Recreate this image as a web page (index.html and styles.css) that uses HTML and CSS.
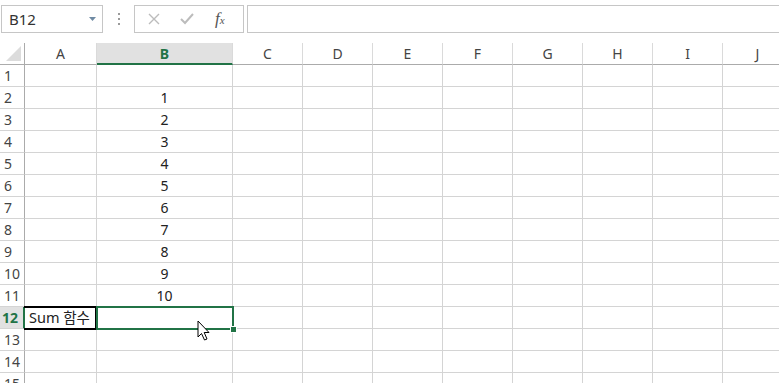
FILE: index.html
```html
<!DOCTYPE html>
<html lang="ko">
    <head>
        <meta charset="UTF-8">
        <title>Sum 함수</title>
        <link rel="stylesheet" href="styles.css">
    </head>
    <body>
        <div class="toolbar">
            <div class="namebox">
                <span>B12</span>
                <svg class="drop" width="8" height="5" viewBox="0 0 8 5"><path d="M0 0 H7 L3.5 4 Z" fill="#6f8aa3"/></svg>
            </div>
            <div class="dots"><i></i><i></i><i></i></div>
            <div class="fnbox">
                <svg width="12" height="12" viewBox="0 0 12 12"><path d="M1 1 L11 11 M11 1 L1 11" stroke="#bcbcbc" stroke-width="1.4"/></svg>
                <svg width="14" height="12" viewBox="0 0 14 12"><path d="M1 6 L5 10 L13 1" stroke="#bcbcbc" stroke-width="2" fill="none"/></svg>
                <span class="fx">f<sub>x</sub></span>
            </div>
            <div class="formula"></div>
        </div>

        <div class="sheet">
            <div class="row head">
                <div class="rh corner"><svg width="15" height="15" viewBox="0 0 15 15"><path d="M15 0 V15 H0 Z" fill="#dcdcdc"/></svg></div>
                <div class="c a">A</div><div class="c b sel">B</div><div class="c">C</div><div class="c">D</div><div class="c">E</div><div class="c">F</div><div class="c">G</div><div class="c">H</div><div class="c">I</div><div class="c">J</div>
            </div>
            <div class="row"><div class="rh">1</div><div class="c a"></div><div class="c b"></div><div class="c"></div><div class="c"></div><div class="c"></div><div class="c"></div><div class="c"></div><div class="c"></div><div class="c"></div><div class="c"></div></div>
            <div class="row"><div class="rh">2</div><div class="c a"></div><div class="c b">1</div><div class="c"></div><div class="c"></div><div class="c"></div><div class="c"></div><div class="c"></div><div class="c"></div><div class="c"></div><div class="c"></div></div>
            <div class="row"><div class="rh">3</div><div class="c a"></div><div class="c b">2</div><div class="c"></div><div class="c"></div><div class="c"></div><div class="c"></div><div class="c"></div><div class="c"></div><div class="c"></div><div class="c"></div></div>
            <div class="row"><div class="rh">4</div><div class="c a"></div><div class="c b">3</div><div class="c"></div><div class="c"></div><div class="c"></div><div class="c"></div><div class="c"></div><div class="c"></div><div class="c"></div><div class="c"></div></div>
            <div class="row"><div class="rh">5</div><div class="c a"></div><div class="c b">4</div><div class="c"></div><div class="c"></div><div class="c"></div><div class="c"></div><div class="c"></div><div class="c"></div><div class="c"></div><div class="c"></div></div>
            <div class="row"><div class="rh">6</div><div class="c a"></div><div class="c b">5</div><div class="c"></div><div class="c"></div><div class="c"></div><div class="c"></div><div class="c"></div><div class="c"></div><div class="c"></div><div class="c"></div></div>
            <div class="row"><div class="rh">7</div><div class="c a"></div><div class="c b">6</div><div class="c"></div><div class="c"></div><div class="c"></div><div class="c"></div><div class="c"></div><div class="c"></div><div class="c"></div><div class="c"></div></div>
            <div class="row"><div class="rh">8</div><div class="c a"></div><div class="c b">7</div><div class="c"></div><div class="c"></div><div class="c"></div><div class="c"></div><div class="c"></div><div class="c"></div><div class="c"></div><div class="c"></div></div>
            <div class="row"><div class="rh">9</div><div class="c a"></div><div class="c b">8</div><div class="c"></div><div class="c"></div><div class="c"></div><div class="c"></div><div class="c"></div><div class="c"></div><div class="c"></div><div class="c"></div></div>
            <div class="row"><div class="rh">10</div><div class="c a"></div><div class="c b">9</div><div class="c"></div><div class="c"></div><div class="c"></div><div class="c"></div><div class="c"></div><div class="c"></div><div class="c"></div><div class="c"></div></div>
            <div class="row"><div class="rh">11</div><div class="c a"></div><div class="c b">10</div><div class="c"></div><div class="c"></div><div class="c"></div><div class="c"></div><div class="c"></div><div class="c"></div><div class="c"></div><div class="c"></div></div>
            <div class="row"><div class="rh sel">12</div><div class="c a editing">Sum 함수</div><div class="c b active"><span class="handle"></span><svg class="cursor" width="14" height="22" viewBox="0 0 14 22"><path d="M1 1 V17 L4.5 13.5 L7.5 20 L10 19 L7.2 12.5 H12 Z" fill="#fff" stroke="#000" stroke-width="1"/></svg></div><div class="c"></div><div class="c"></div><div class="c"></div><div class="c"></div><div class="c"></div><div class="c"></div><div class="c"></div><div class="c"></div></div>
            <div class="row"><div class="rh">13</div><div class="c a"></div><div class="c b"></div><div class="c"></div><div class="c"></div><div class="c"></div><div class="c"></div><div class="c"></div><div class="c"></div><div class="c"></div><div class="c"></div></div>
            <div class="row"><div class="rh">14</div><div class="c a"></div><div class="c b"></div><div class="c"></div><div class="c"></div><div class="c"></div><div class="c"></div><div class="c"></div><div class="c"></div><div class="c"></div><div class="c"></div></div>
            <div class="row"><div class="rh">15</div><div class="c a"></div><div class="c b"></div><div class="c"></div><div class="c"></div><div class="c"></div><div class="c"></div><div class="c"></div><div class="c"></div><div class="c"></div><div class="c"></div></div>
        </div>
    </body>
</html>
```

FILE: styles.css
```css
* {
    box-sizing: border-box;
}

html, body {
    margin: 0;
    height: 100%;
    overflow: hidden;
}

body {
    background: #fff;
    font-family: "Noto Sans", "Noto Sans CJK KR", sans-serif;
    font-size: 14px;
    color: #222;
}

.toolbar {
    display: flex;
    align-items: center;
    height: 28px;
    margin: 5px 0 10px 1px;
}

.namebox {
    width: 102px;
    height: 28px;
    border: 1px solid #c6c6c6;
    display: flex;
    align-items: center;
    justify-content: space-between;
    padding: 0 5px 0 7px;
    font-size: 15px;
    color: #333;
}

.namebox .drop {
    margin-top: 1px;
}

.dots {
    width: 31px;
    display: flex;
    flex-direction: column;
    align-items: center;
    gap: 3px;
}

.dots i {
    width: 2px;
    height: 2px;
    background: #9a9a9a;
}

.fnbox {
    width: 110px;
    height: 28px;
    border: 1px solid #c6c6c6;
    display: flex;
    align-items: center;
    padding: 0 10px 0 13px;
    gap: 20px;
}

.fnbox .fx {
    font-family: "Liberation Serif", serif;
    font-style: italic;
    font-size: 17px;
    color: #555;
    margin-left: 1px;
}

.fnbox .fx sub {
    font-size: 11px;
    vertical-align: 0;
}

.formula {
    flex: 1;
    height: 28px;
    margin-left: 3px;
    border: 1px solid #c6c6c6;
    border-right: none;
}

.row {
    display: flex;
    height: 22px;
}

.rh {
    flex: 0 0 25px;
    border-right: 1px solid #ababab;
    border-bottom: 1px solid #d4d4d4;
    padding-left: 4px;
    line-height: 21px;
    color: #444;
    font-size: 14px;
}

.rh.sel {
    background: #e1e1e1;
    color: #217346;
    font-weight: bold;
    padding-left: 2px;
    border-right: 2px solid #217346;
}

.c {
    flex: 0 0 70px;
    border-right: 1px solid #d4d4d4;
    border-bottom: 1px solid #d4d4d4;
    text-align: center;
    line-height: 21px;
    white-space: nowrap;
}

.c.a {
    flex-basis: 72px;
}

.c.b {
    flex-basis: 136px;
}

.head .rh,
.head .c {
    border-bottom-color: #ababab;
    border-right-color: #dadada;
    color: #444;
}

.head .corner {
    display: flex;
    align-items: flex-end;
    justify-content: flex-end;
    padding: 0 3px 3px 0;
    border-right-color: #ababab;
}

.head .c.sel {
    background: #e1e1e1;
    color: #217346;
    font-weight: bold;
    border-bottom: 2px solid #217346;
}

.c.editing {
    position: relative;
    text-align: left;
    padding-left: 4px;
    font-size: 14.5px;
    overflow: visible;
}

.c.editing::after {
    content: "";
    position: absolute;
    left: -1px;
    top: -1px;
    right: -1px;
    bottom: -2px;
    border: 2px solid #000;
    border-left: none;
}

.c.active {
    position: relative;
}

.c.active::after {
    content: "";
    position: absolute;
    left: -1px;
    top: -1px;
    right: -2px;
    bottom: -2px;
    border: 2px solid #217346;
}

.handle {
    position: absolute;
    right: -5px;
    bottom: -5px;
    width: 7px;
    height: 7px;
    background: #217346;
    border: 1px solid #fff;
    z-index: 2;
}

.cursor {
    position: absolute;
    left: 100px;
    top: 13px;
    z-index: 3;
}
```
